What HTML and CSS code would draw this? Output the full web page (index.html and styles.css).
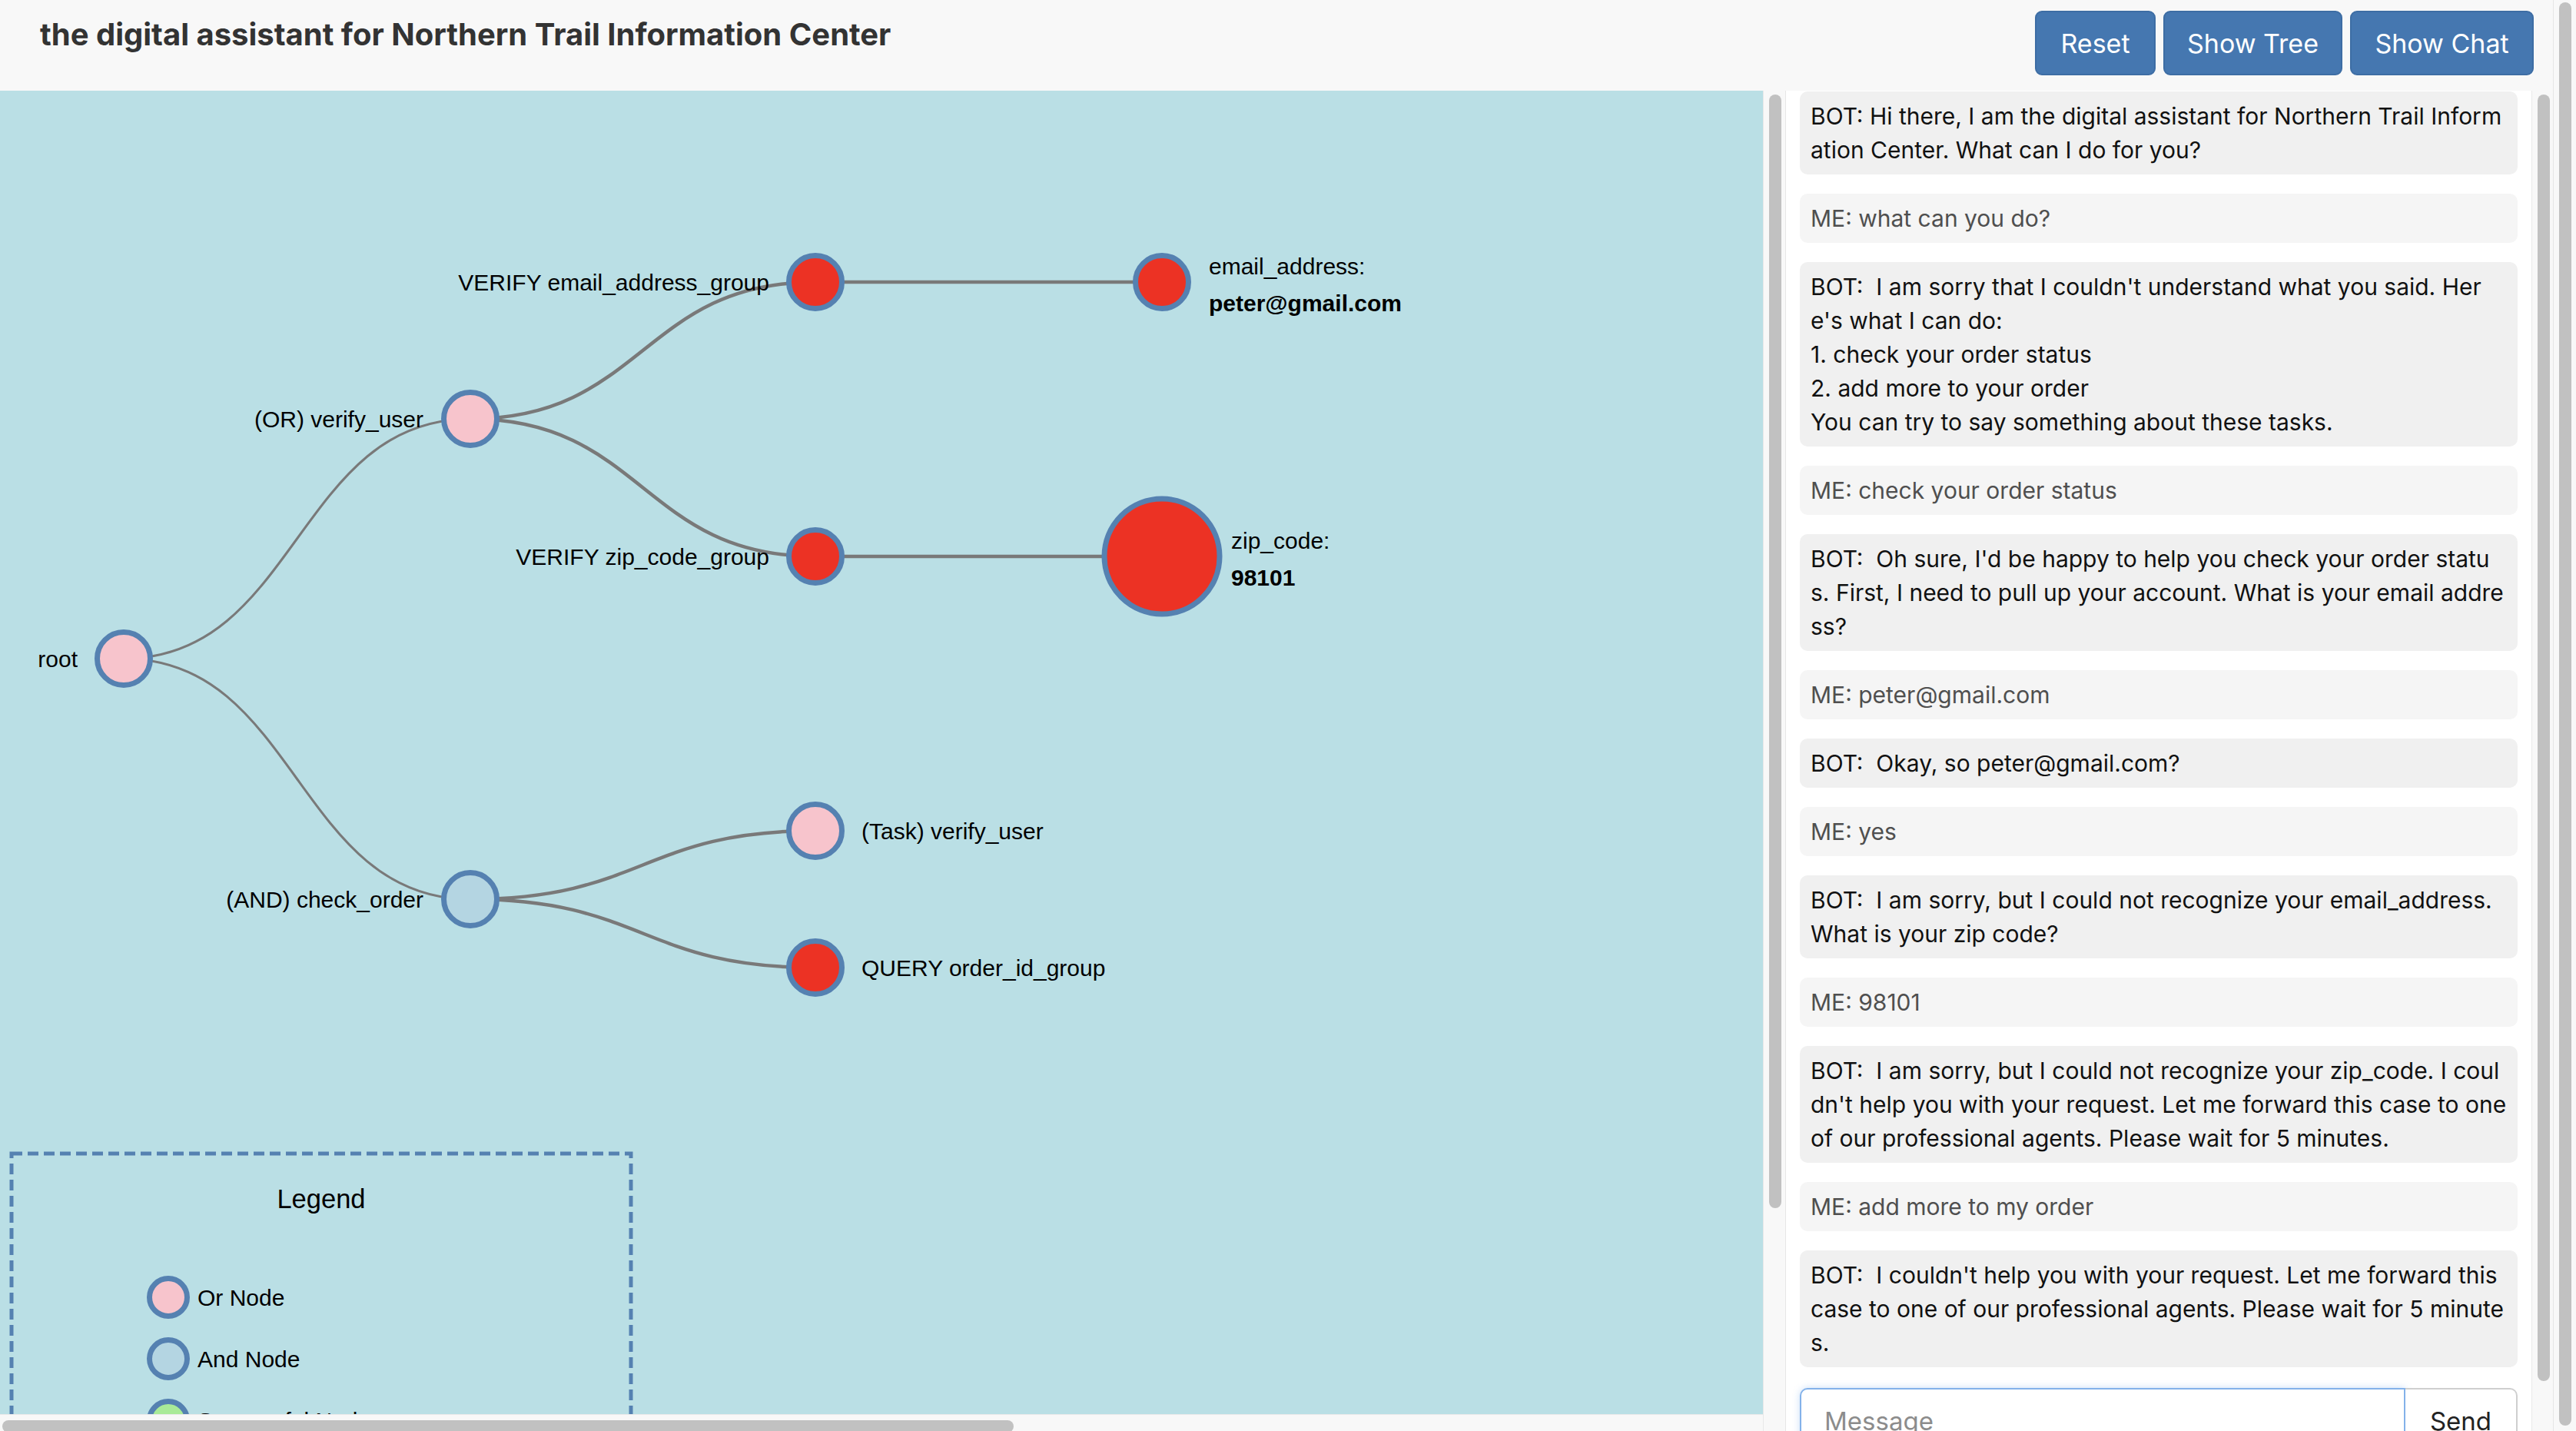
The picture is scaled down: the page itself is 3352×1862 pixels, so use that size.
FILE: index.html
```html
<!DOCTYPE html>
<html lang="en">
<head>
<meta charset="utf-8">
<title>Northern Trail Information Center</title>
<link rel="stylesheet" href="styles.css">
</head>
<body>
<div class="app">
  <div class="page">
    <header class="header">
      <h1 class="title">the digital assistant for Northern Trail Information Center</h1>
      <div class="actions">
        <button class="btn btn-reset">Reset</button>
        <button class="btn btn-tree">Show Tree</button>
        <button class="btn btn-chat">Show Chat</button>
      </div>
    </header>
    <main class="content">
      <section class="tree-wrap">
        <div class="tree-canvas">
          <svg class="tree-svg" width="2294" height="1722" viewBox="0 118 2294 1722" xmlns="http://www.w3.org/2000/svg">
            <g class="links">
              <path class="link thin" d="M161,857C386.5,857 386.5,545 612,545"/>
              <path class="link thin" d="M161,857C386.5,857 386.5,1170 612,1170"/>
              <path class="link" d="M612,545C836.5,545 836.5,367 1061,367"/>
              <path class="link" d="M612,545C836.5,545 836.5,724 1061,724"/>
              <path class="link" d="M612,1170C836.5,1170 836.5,1081 1061,1081"/>
              <path class="link" d="M612,1170C836.5,1170 836.5,1259 1061,1259"/>
              <path class="link" d="M1061,367L1512,367"/>
              <path class="link" d="M1061,724L1512,724"/>
            </g>
            <g class="nodes">
              <circle class="node or" cx="161" cy="857" r="34.5"/>
              <text class="label" x="101" y="857" dy="0.35em" text-anchor="end">root</text>

              <circle class="node or" cx="612" cy="545" r="34.5"/>
              <text class="label" x="551" y="545" dy="0.35em" text-anchor="end">(OR) verify_user</text>

              <circle class="node and" cx="612" cy="1170" r="34.5"/>
              <text class="label" x="551" y="1170" dy="0.35em" text-anchor="end">(AND) check_order</text>

              <circle class="node fail" cx="1061" cy="367" r="34.5"/>
              <text class="label" x="1001" y="367" dy="0.35em" text-anchor="end">VERIFY email_address_group</text>

              <circle class="node fail" cx="1061" cy="724" r="34.5"/>
              <text class="label" x="1001" y="724" dy="0.35em" text-anchor="end">VERIFY zip_code_group</text>

              <circle class="node or" cx="1061" cy="1081" r="34.5"/>
              <text class="label" x="1121" y="1081" dy="0.35em">(Task) verify_user</text>

              <circle class="node fail" cx="1061" cy="1259" r="34.5"/>
              <text class="label" x="1121" y="1259" dy="0.35em">QUERY order_id_group</text>

              <circle class="node fail" cx="1512" cy="367" r="34.5"/>
              <text class="label" x="1573" y="357">email_address:</text>
              <text class="label value" x="1573" y="405">peter@gmail.com</text>

              <circle class="node fail" cx="1512" cy="724" r="75"/>
              <text class="label" x="1602" y="714">zip_code:</text>
              <text class="label value" x="1602" y="762">98101</text>
            </g>
            <g class="legend">
              <rect class="legend-box" x="15" y="1501" width="806" height="520"/>
              <text class="legend-title" x="418" y="1572" text-anchor="middle">Legend</text>
              <circle class="node or" cx="219" cy="1688" r="24.5"/>
              <text class="label" x="257" y="1688" dy="0.35em">Or Node</text>
              <circle class="node and" cx="219" cy="1768" r="24.5"/>
              <text class="label" x="257" y="1768" dy="0.35em">And Node</text>
              <circle class="node ok" cx="219" cy="1848" r="24.5"/>
              <text class="label" x="257" y="1848" dy="0.35em">Successful Node</text>
            </g>
          </svg>
        </div>
        <div class="vtrack tree-vtrack"><div class="thumb tree-thumb"></div></div>
        <div class="htrack"><div class="hthumb"></div></div>
      </section>

      <section class="chat">
        <div class="chat-body">
          <div class="msg bot">BOT: Hi there, I am the digital assistant for Northern Trail Inform
ation Center. What can I do for you?</div>
          <div class="msg me">ME: what can you do?</div>
          <div class="msg bot">BOT:  I am sorry that I couldn't understand what you said. Her
e's what I can do:
1. check your order status
2. add more to your order
You can try to say something about these tasks.</div>
          <div class="msg me">ME: check your order status</div>
          <div class="msg bot">BOT:  Oh sure, I'd be happy to help you check your order statu
s. First, I need to pull up your account. What is your email addre
ss?</div>
          <div class="msg me">ME: peter@gmail.com</div>
          <div class="msg bot">BOT:  Okay, so peter@gmail.com?</div>
          <div class="msg me">ME: yes</div>
          <div class="msg bot">BOT:  I am sorry, but I could not recognize your email_address.
What is your zip code?</div>
          <div class="msg me">ME: 98101</div>
          <div class="msg bot">BOT:  I am sorry, but I could not recognize your zip_code. I coul
dn't help you with your request. Let me forward this case to one
of our professional agents. Please wait for 5 minutes.</div>
          <div class="msg me">ME: add more to my order</div>
          <div class="msg bot">BOT:  I couldn't help you with your request. Let me forward this
case to one of our professional agents. Please wait for 5 minute
s.</div>
          <div class="input-group">
            <input class="msg-input" type="text" placeholder="Message">
            <button class="send">Send</button>
          </div>
        </div>
        <div class="vtrack chat-vtrack"><div class="thumb chat-thumb"></div></div>
      </section>
    </main>
  </div>
  <div class="vtrack page-vtrack"><div class="thumb page-thumb"></div></div>
</div>
</body>
</html>
```
FILE: styles.css
```css
html, body {
  margin: 0;
  padding: 0;
  height: 100%;
  overflow: hidden;
}

body {
  font-family: "Inter", "Liberation Sans", sans-serif;
  background: #f8f8f8;
  color: #111;
}

.app {
  display: flex;
  width: 3352px;
  height: 1862px;
  overflow: hidden;
}

.page {
  width: 3322px;
  flex: none;
  display: flex;
  flex-direction: column;
  height: 1862px;
}

/* ---------- header ---------- */
.header {
  height: 118px;
  flex: none;
  display: flex;
  justify-content: space-between;
  align-items: flex-start;
  padding: 0 25px 0 52px;
  background: #f8f8f8;
  box-sizing: border-box;
}

.title {
  margin: 0;
  padding-top: 21px;
  font-size: 40px;
  line-height: 48px;
  font-weight: 700;
  color: #333;
}

.actions {
  display: flex;
  gap: 10px;
  margin-top: 14px;
}

.btn {
  height: 84px;
  padding: 0;
  border: 2px solid #3d6da4;
  border-radius: 9px;
  background: #4577b0;
  color: #fff;
  font-family: "Inter", "Liberation Sans", sans-serif;
  font-size: 34px;
  font-weight: 400;
  display: flex;
  align-items: center;
  justify-content: center;
}

.btn-reset { width: 157px; }
.btn-tree  { width: 233px; }
.btn-chat  { width: 239px; }

/* ---------- content ---------- */
.content {
  flex: 1;
  display: flex;
  min-height: 0;
  overflow: hidden;
}

.tree-wrap {
  flex: none;
  display: grid;
  grid-template-columns: 2294px 29px;
  grid-template-rows: 1722px 30px;
  overflow: hidden;
}

.tree-canvas {
  background: #badfe5;
  overflow: hidden;
}

.tree-svg {
  display: block;
}

.link {
  fill: none;
  stroke: #797979;
  stroke-width: 4.5;
}

.link.thin {
  stroke-width: 3;
}

.node {
  stroke: #5581b1;
  stroke-width: 7;
}

.node.or   { fill: #f7c4cc; }
.node.and  { fill: #b4d5e2; }
.node.fail { fill: #ec3224; }
.node.ok   { fill: #a9ea98; }

.label {
  font-family: "Liberation Sans", Arial, sans-serif;
  font-size: 30px;
  fill: #000;
}

.label.value {
  font-weight: 700;
}

.legend-box {
  fill: none;
  stroke: #5581b1;
  stroke-width: 5;
  stroke-dasharray: 14 7;
}

.legend-title {
  font-family: "Liberation Sans", Arial, sans-serif;
  font-size: 34.5px;
  fill: #000;
}

/* ---------- scrollbars ---------- */
.vtrack {
  background: #f8f8f8;
  border-left: 1px solid #e9e9e9;
  box-sizing: border-box;
}

.thumb {
  width: 16px;
  margin-left: 7px;
  background: #c1c1c1;
  border-radius: 8px;
}

.tree-vtrack {
  grid-column: 2;
  grid-row: 1 / span 2;
}

.tree-thumb {
  margin-top: 5px;
  height: 1449px;
}

.htrack {
  grid-column: 1;
  grid-row: 2;
  background: #f8f8f8;
  border-top: 1px solid #e9e9e9;
  box-sizing: border-box;
  padding-top: 7px;
}

.hthumb {
  width: 1316px;
  height: 16px;
  margin-left: 3px;
  background: #c1c1c1;
  border-radius: 8px;
}

.chat-vtrack {
  width: 28px;
  flex: none;
}

.chat-thumb {
  margin-top: 5px;
  height: 1674px;
}

.page-vtrack {
  width: 30px;
  flex: none;
  height: 1862px;
  border-left-color: #e6e6e6;
}

.page-thumb {
  margin-top: 3px;
  height: 1852px;
}

/* ---------- chat ---------- */
.chat {
  flex: 1;
  display: flex;
  background: #fff;
  border-left: 1px solid #e6e6e6;
  min-width: 0;
}

.chat-body {
  flex: 1;
  padding: 1px 18px 0;
  display: flex;
  flex-direction: column;
  gap: 25px;
  overflow: hidden;
}

.msg {
  flex: none;
  padding: 10px 14px;
  border-radius: 10px;
  font-size: 30px;
  line-height: 44px;
  white-space: pre;
}

.msg.bot {
  background: #f0f0f0;
  color: #111;
}

.msg.me {
  background: #f5f5f5;
  color: #4f4f4f;
}

.input-group {
  flex: none;
  display: flex;
  margin-top: 2px;
  height: 86px;
}

.msg-input {
  flex: 1;
  min-width: 0;
  height: 86px;
  box-sizing: border-box;
  border: 2px solid #84b2ea;
  border-radius: 10px 0 0 10px;
  padding: 0 30px;
  font-family: "Inter", "Liberation Sans", sans-serif;
  font-size: 33px;
  color: #222;
  background: #fff;
  outline: none;
  box-shadow: 0 0 10px rgba(100, 160, 235, 0.35);
}

.msg-input::placeholder {
  color: #8c8c8c;
}

.send {
  width: 146px;
  flex: none;
  height: 86px;
  box-sizing: border-box;
  border: 2px solid #cfcfcf;
  border-left: none;
  border-radius: 0 10px 10px 0;
  background: #fff;
  color: #222;
  font-family: "Inter", "Liberation Sans", sans-serif;
  font-size: 33px;
  padding: 0;
}
```
